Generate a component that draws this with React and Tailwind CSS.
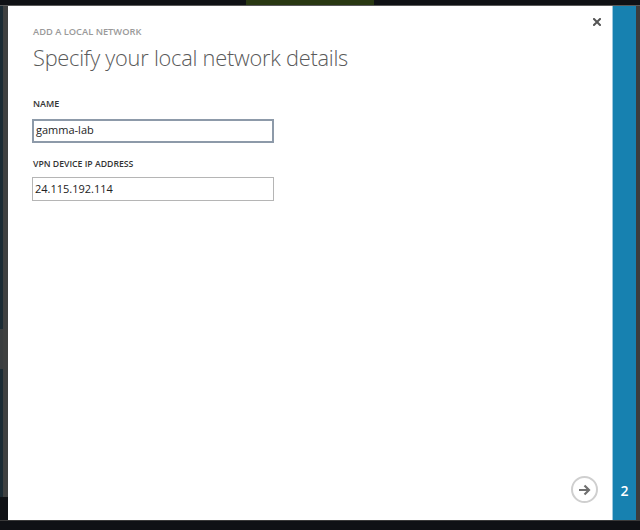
import React from "react";

export default function App() {
  return (
    <div className="w-[640px] h-[530px] bg-[#0f1115] flex flex-col overflow-hidden" style={{ fontFamily: '"Open Sans", "Noto Sans", sans-serif' }}>
      {/* top strip */}
      <div className="h-[5px] flex shrink-0">
        <div className="w-[246px]" />
        <div className="w-[128px] bg-[#293812]" />
      </div>
      <div className="h-px bg-[#5a5a5a] shrink-0" />
      {/* main row */}
      <div className="flex flex-1 min-h-0">
        {/* left edge */}
        <div className="flex flex-col w-[8px] shrink-0">
          <div className="flex flex-1">
            <div className="w-[3px] bg-[#1b2b34] flex flex-col">
              <div className="h-[323px]" />
              <div className="h-[40px] bg-[#3a3d3f]" />
            </div>
            <div className="w-[5px] bg-[#3f4040]" />
          </div>
          <div className="h-[23px] bg-[#0f1115]" />
        </div>
        {/* dialog */}
        <div className="relative flex-1 bg-white flex flex-col px-[25px] pt-[21px] pb-[17px]">
          <svg width="8" height="8" viewBox="0 0 8 8" className="absolute top-[12px] right-[11px]">
            <path d="M1 1 L7 7 M7 1 L1 7" stroke="#555" strokeWidth="2" strokeLinecap="square" />
          </svg>
          <div className="text-[9.3px] font-semibold text-[#9a9a9a] leading-none">ADD A LOCAL NETWORK</div>
          <div className="text-[21.8px] font-light text-[#5a5a5a] leading-none mt-[11px] tracking-[-0.25px]">Specify your local network details</div>
          <div className="text-[9px] font-semibold text-[#333] leading-none mt-[30px]">NAME</div>
          <div className="mt-[10.5px] w-[242px] h-[24px] border-2 border-[#8d9aa9] flex items-center px-[2px] text-[11px] text-[#222] -ml-px">gamma-lab</div>
          <div className="text-[8.7px] font-semibold text-[#333] leading-none mt-[17px]">VPN DEVICE IP ADDRESS</div>
          <div className="mt-[9px] w-[242px] h-[24px] border border-[#b5b5b5] flex items-center px-[2px] text-[11px] text-[#222] -ml-px">24.115.192.114</div>
          <div className="flex-1" />
          <div className="flex justify-end">
            <div className="w-[27px] h-[27px] rounded-full border-2 border-[#cfcfcf] flex items-center justify-center -mr-[11px]">
              <svg width="13" height="12" viewBox="0 0 13 12">
                <path d="M1 6 H11 M6.5 1.5 L11 6 L6.5 10.5" stroke="#707070" strokeWidth="2.2" fill="none" strokeLinejoin="miter" />
              </svg>
            </div>
          </div>
        </div>
        {/* blue strip */}
        <div className="w-px bg-[#9cc8de] shrink-0" />
        <div className="w-[23px] bg-[#1781b0] shrink-0 flex flex-col justify-end items-center pb-[22px]">
          <span className="text-white font-semibold text-[14px] leading-none">2</span>
        </div>
        <div className="w-[4px] bg-[#3c3c3c] shrink-0" />
      </div>
      <div className="h-px bg-[#3a3a3a] shrink-0" />
      <div className="h-[9px] shrink-0" />
    </div>
  );
}
